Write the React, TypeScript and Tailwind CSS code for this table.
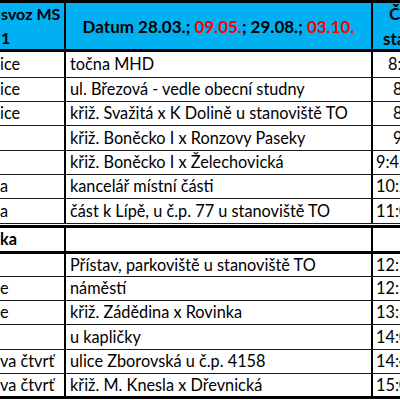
import React from "react";

type R = { h: string; a: string; b: string; t: string; p: string };

const top: R[] = [
  { h: "h-[26px]", a: "ice", b: "točna MHD", t: "8:00", p: "pl-[15px]" },
  { h: "h-[24px]", a: "ice", b: "ul. Březová - vedle obecní studny", t: "8:30", p: "pl-[20px]" },
  { h: "h-[24px]", a: "ice", b: "křiž. Svažitá x K Dolině u stanoviště TO", t: "8:50", p: "pl-[20px]" },
  { h: "h-[25px]", a: "", b: "křiž. Boněcko I x Ronzovy Paseky", t: "9:15", p: "pl-[20px]" },
  { h: "h-[24px]", a: "", b: "křiž. Boněcko I x Želechovická", t: "9:45", p: "pl-[3px]" },
  { h: "h-[24px]", a: "a", b: "kancelář místní části", t: "10:20", p: "pl-[3px]" },
  { h: "h-[25px]", a: "a", b: "část k Lípě, u č.p. 77 u stanoviště TO", t: "11:00", p: "pl-[3px]" },
];

const bottom: R[] = [
  { h: "h-[23px]", a: "", b: "Přístav, parkoviště u stanoviště TO", t: "12:15", p: "pl-[3px]" },
  { h: "h-[24px]", a: "e", b: "náměstí", t: "12:50", p: "pl-[3px]" },
  { h: "h-[24px]", a: "e", b: "křiž. Zádědina x Rovinka", t: "13:30", p: "pl-[3px]" },
  { h: "h-[25px]", a: "", b: "u kapličky", t: "14:05", p: "pl-[3px]" },
  { h: "h-[24px]", a: "va čtvrť", b: "ulice Zborovská u č.p. 4158", t: "14:40", p: "pl-[3px]" },
];

function Row({ r, last }: { r: R; last?: boolean }) {
  return (
    <div className={`flex ${r.h} ${last ? "" : "border-b border-[#1a1a1a]"} box-border`}>
      <div className="w-[66px] shrink-0 border-r-2 border-black flex items-center overflow-hidden whitespace-nowrap">
        {r.a}
      </div>
      <div className="w-[307px] shrink-0 border-r-2 border-black flex items-center pl-[4px] overflow-hidden whitespace-nowrap">
        {r.b}
      </div>
      <div className={`flex-1 flex items-center ${r.p} overflow-hidden whitespace-nowrap`}>{r.t}</div>
    </div>
  );
}

export default function App() {
  return (
    <div
      className="w-[400px] h-[400px] overflow-hidden bg-white text-black text-[16.3px] leading-none"
      style={{ fontFamily: "Lato, 'Noto Sans', sans-serif" }}
    >
      <div className="border-t-[3px] border-black" />
      {/* header */}
      <div className="flex h-[46px] bg-[#00b0f0] font-bold text-[17px] border-b-[3px] border-black box-content">
        <div className="w-[66px] shrink-0 border-r-2 border-black flex flex-col justify-center gap-[8px] overflow-hidden whitespace-nowrap pl-[1px] text-[16px]">
          <span>svoz MS</span>
          <span>1</span>
        </div>
        <div className="w-[307px] shrink-0 border-r-2 border-black flex items-center justify-center whitespace-nowrap">
          <span>
            Datum 28.03.; <span className="text-[#ff0000]">09.05.</span>; 29.08.;{" "}
            <span className="text-[#ff0000]">03.10.</span>
          </span>
        </div>
        <div className="flex-1 flex flex-col justify-center gap-[8px] overflow-hidden whitespace-nowrap">
          <span className="pl-[16px]">Čas</span>
          <span className="pl-[10px]">stanoviště</span>
        </div>
      </div>
      {top.map((r, i) => (
        <Row key={i} r={r} />
      ))}
      <div className="h-[1px]" />
      <div className="border-t-[3px] border-black" />
      {/* section row */}
      <div className="flex h-[23px] font-bold border-b-[3px] border-black box-content">
        <div className="w-[66px] shrink-0 border-r-2 border-black flex items-center overflow-hidden whitespace-nowrap">
          ka
        </div>
        <div className="w-[307px] shrink-0 border-r-2 border-black" />
        <div className="flex-1" />
      </div>
      {bottom.map((r, i) => (
        <Row key={i} r={r} />
      ))}
      <Row
        r={{ h: "h-[22px]", a: "va čtvrť", b: "křiž. M. Knesla x Dřevnická", t: "15:00", p: "pl-[3px]" }}
        last
      />
      <div className="border-t-[3px] border-black" />
    </div>
  );
}
